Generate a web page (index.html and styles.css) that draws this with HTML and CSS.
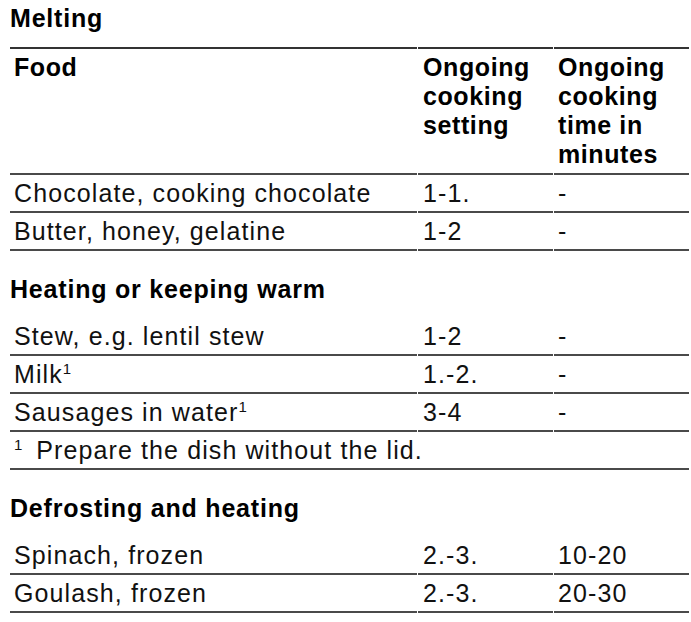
FILE: index.html
```html
<!DOCTYPE html>
<html lang="en">
<head>
<meta charset="utf-8">
<title>Cooking table</title>
<link rel="stylesheet" href="styles.css">
</head>
<body>
<div class="page">
  <section class="section first">
    <h2 class="heading">Melting</h2>
    <table class="tbl">
      <colgroup><col class="c1"><col class="c2"><col class="c3"></colgroup>
      <thead>
        <tr><th>Food</th><th>Ongoing cooking setting</th><th>Ongoing cooking time in minutes</th></tr>
      </thead>
      <tbody>
        <tr><td>Chocolate, cooking chocolate</td><td>1-1.</td><td>-</td></tr>
        <tr><td>Butter, honey, gelatine</td><td>1-2</td><td>-</td></tr>
      </tbody>
    </table>
  </section>
  <section class="section">
    <h2 class="heading">Heating or keeping warm</h2>
    <table class="tbl">
      <colgroup><col class="c1"><col class="c2"><col class="c3"></colgroup>
      <tbody>
        <tr><td>Stew, e.g. lentil stew</td><td>1-2</td><td>-</td></tr>
        <tr><td>Milk<sup class="sup">1</sup></td><td>1.-2.</td><td>-</td></tr>
        <tr><td>Sausages in water<sup class="sup">1</sup></td><td>3-4</td><td>-</td></tr>
        <tr><td class="note" colspan="3"><sup class="sup note-mark">1</sup>Prepare the dish without the lid.</td></tr>
      </tbody>
    </table>
  </section>
  <section class="section">
    <h2 class="heading">Defrosting and heating</h2>
    <table class="tbl">
      <colgroup><col class="c1"><col class="c2"><col class="c3"></colgroup>
      <tbody>
        <tr><td>Spinach, frozen</td><td>2.-3.</td><td>10-20</td></tr>
        <tr><td>Goulash, frozen</td><td>2.-3.</td><td>20-30</td></tr>
      </tbody>
    </table>
  </section>
</div>
</body>
</html>
```
FILE: styles.css
```css
html, body {
  margin: 0;
  padding: 0;
  background: #ffffff;
}
body {
  font-family: "Liberation Sans", Arial, sans-serif;
  color: #000;
}
.page {
  padding-left: 10px;
  width: 679px;
}
.section {
  margin-top: 20px;
}
.section.first {
  margin-top: 0;
}
.heading {
  margin: 0;
  font-size: 25px;
  font-weight: bold;
  line-height: 30px;
  letter-spacing: 0.8px;
  padding: 3px 0 14px;
  color: #000;
}
.tbl {
  width: 679px;
  border-collapse: separate;
  border-spacing: 1px 0;
  margin-left: -1px;
  table-layout: fixed;
}
.c1 { width: 407px; }
.c2 { width: 135px; }
.c3 { width: 135px; }
.tbl td, .tbl th {
  font-size: 25px;
  line-height: 28px;
  letter-spacing: 1.1px;
  text-align: left;
  vertical-align: top;
  padding: 4px 4px 4px 4px;
  border-bottom: 2px solid #4a4a4a;
  color: #111;
}
.tbl td:nth-child(2), .tbl th:nth-child(2) {
  padding-left: 5px;
}
.tbl th {
  font-weight: bold;
  letter-spacing: 0.6px;
  line-height: 29px;
  color: #000;
  border-top: 2px solid #333;
  padding-top: 4px;
  padding-bottom: 4px;
}
.tbl tbody:first-child tr:first-child td {
  border-top: 2px solid #4a4a4a;
}
.sup {
  font-size: 15px;
  line-height: 0;
  vertical-align: 9px;
  letter-spacing: 0;
}
.note-mark {
  margin-right: 14px;
}
```
